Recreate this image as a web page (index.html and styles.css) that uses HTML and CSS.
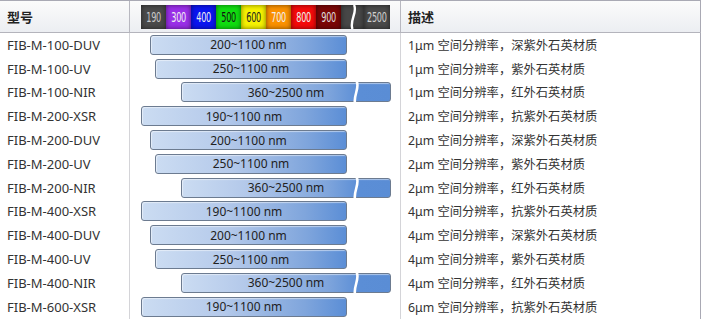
FILE: index.html
```html
<!DOCTYPE html>
<html>
<head>
<meta charset="utf-8">
<link rel="stylesheet" href="styles.css">
</head>
<body>
<div class="table">
  <div class="row head">
    <div class="cell c1">型号</div>
    <div class="cell c2">
      <div class="spectrum">
        <span class="sw s190"><i>190</i></span>
        <span class="sw s300"><i>300</i></span>
        <span class="sw s400"><i>400</i></span>
        <span class="sw s500"><i>500</i></span>
        <span class="sw s600"><i>600</i></span>
        <span class="sw s700"><i>700</i></span>
        <span class="sw s800"><i>800</i></span>
        <span class="sw s900"><i>900</i></span>
        <span class="gapbox"><svg class="wave" viewBox="0 0 8 24" width="8" height="24"><path d="M5 0 C9 7 0 16 3.5 24" fill="none" stroke="#fff" stroke-width="2.4"/></svg></span>
        <span class="sw s2500"><i>2500</i></span>
      </div>
    </div>
    <div class="cell c3">描述</div>
  </div>

  <div class="row"><div class="cell c1">FIB-M-100-DUV</div><div class="cell c2"><div class="bar r200">200~1100 nm</div></div><div class="cell c3">1μm 空间分辨率，深紫外石英材质</div></div>
  <div class="row"><div class="cell c1">FIB-M-100-UV</div><div class="cell c2"><div class="bar r250">250~1100 nm</div></div><div class="cell c3">1μm 空间分辨率，紫外石英材质</div></div>
  <div class="row"><div class="cell c1">FIB-M-100-NIR</div><div class="cell c2"><div class="bar r360">360~2500 nm<svg class="cut" viewBox="0 0 8 22" width="8" height="22"><path d="M4.5 -1 C8.5 6 0 15 3.5 23" fill="none" stroke="#fff" stroke-width="2.6"/></svg></div></div><div class="cell c3">1μm 空间分辨率，红外石英材质</div></div>
  <div class="row"><div class="cell c1">FIB-M-200-XSR</div><div class="cell c2"><div class="bar r190">190~1100 nm</div></div><div class="cell c3">2μm 空间分辨率，抗紫外石英材质</div></div>
  <div class="row"><div class="cell c1">FIB-M-200-DUV</div><div class="cell c2"><div class="bar r200">200~1100 nm</div></div><div class="cell c3">2μm 空间分辨率，深紫外石英材质</div></div>
  <div class="row"><div class="cell c1">FIB-M-200-UV</div><div class="cell c2"><div class="bar r250">250~1100 nm</div></div><div class="cell c3">2μm 空间分辨率，紫外石英材质</div></div>
  <div class="row"><div class="cell c1">FIB-M-200-NIR</div><div class="cell c2"><div class="bar r360">360~2500 nm<svg class="cut" viewBox="0 0 8 22" width="8" height="22"><path d="M4.5 -1 C8.5 6 0 15 3.5 23" fill="none" stroke="#fff" stroke-width="2.6"/></svg></div></div><div class="cell c3">2μm 空间分辨率，红外石英材质</div></div>
  <div class="row"><div class="cell c1">FIB-M-400-XSR</div><div class="cell c2"><div class="bar r190">190~1100 nm</div></div><div class="cell c3">4μm 空间分辨率，抗紫外石英材质</div></div>
  <div class="row"><div class="cell c1">FIB-M-400-DUV</div><div class="cell c2"><div class="bar r200">200~1100 nm</div></div><div class="cell c3">4μm 空间分辨率，深紫外石英材质</div></div>
  <div class="row"><div class="cell c1">FIB-M-400-UV</div><div class="cell c2"><div class="bar r250">250~1100 nm</div></div><div class="cell c3">4μm 空间分辨率，紫外石英材质</div></div>
  <div class="row"><div class="cell c1">FIB-M-400-NIR</div><div class="cell c2"><div class="bar r360">360~2500 nm<svg class="cut" viewBox="0 0 8 22" width="8" height="22"><path d="M4.5 -1 C8.5 6 0 15 3.5 23" fill="none" stroke="#fff" stroke-width="2.6"/></svg></div></div><div class="cell c3">4μm 空间分辨率，红外石英材质</div></div>
  <div class="row"><div class="cell c1">FIB-M-600-XSR</div><div class="cell c2"><div class="bar r190">190~1100 nm</div></div><div class="cell c3">6μm 空间分辨率，抗紫外石英材质</div></div>
</div>
</body>
</html>
```
FILE: styles.css
```css
html, body { margin: 0; padding: 0; background: #fff; }
body {
  font-family: "Noto Sans", "Noto Sans CJK SC", sans-serif;
  color: #333;
  font-size: 13px;
}
.table {
  width: 701px;
  border-top: 1px solid #a9a9b4;
}
.row {
  display: grid;
  grid-template-columns: 130px 271px 300px;
  height: 23.8px;
}
.row.head {
  height: 31px;
  border-bottom: 1px solid #b4b4bc;
  background: linear-gradient(#fbfbfb, #eceef2);
}
.cell {
  display: flex;
  align-items: center;
  border-right: 1px solid #d4d4d8;
  box-sizing: border-box;
  white-space: nowrap;
  overflow: hidden;
}
.head .cell { border-right-color: #b8b8c0; font-weight: bold; color: #222; }
.cell.c3 { border-right: 1px solid #a9a9b4; }
.c1 { padding-left: 7px; }
.c3 { padding-left: 7px; font-size: 12.3px; }
.head .c3, .head .c1 { font-size: 13px; }
.c2 { padding-left: 0; }

.spectrum {
  display: flex;
  margin-left: 11px;
  height: 24px;
}
.sw {
  width: 25px;
  height: 24px;
  display: flex;
  align-items: center;
  justify-content: center;
  box-shadow: inset 0 0 5px rgba(0,0,0,0.55);
  font-family: "DejaVu Sans", sans-serif;
  font-weight: normal;
  font-size: 14px;
  color: #f0f0f0;
}
.sw i { font-style: normal; display: inline-block; transform: scaleX(0.58); letter-spacing: -0.5px; }
.s190 { background: #4a4a4a; color: #c8c8c8; }
.s300 { background: #9a2fe8; }
.s400 { background: #0a14f0; }
.s500 { background: #10dd10; color: #111; }
.s600 { background: #f6f200; color: #222; }
.s700 { background: #fb9100; }
.s800 { background: #f50a0a; }
.s900 { background: #7a0606; color: #ddd; }
.s2500 { background: #4a4a4a; color: #cfcfcf; width: 26px; }
.gapbox {
  width: 23px;
  height: 24px;
  background: #474747;
  box-shadow: inset 0 0 5px rgba(0,0,0,0.55);
  display: flex;
  justify-content: center;
}

.bar {
  position: relative;
  height: 20px;
  box-sizing: border-box;
  border: 1px solid #6c7b90;
  border-radius: 3px;
  background: linear-gradient(to right, #cbdcf2 0%, #b4c9ea 40%, #7fa5dc 80%, #5b8ed6 100%);
  font-size: 12px;
  color: #222;
  display: flex;
  align-items: center;
  justify-content: center;
  box-shadow: inset 1px 1px 1px rgba(255,255,255,0.5);
}
.r190 { margin-left: 11px; width: 206px; }
.r200 { margin-left: 20px; width: 197px; }
.r250 { margin-left: 25px; width: 192px; }
.r360 { margin-left: 51px; width: 210px; background: linear-gradient(to right, #cbdcf2 0%, #b4c9ea 30%, #7fa5dc 70%, #5b8ed6 85%, #5a8dd5 100%); }
.cut {
  position: absolute;
  left: 170px;
  top: -1px;
}
```
